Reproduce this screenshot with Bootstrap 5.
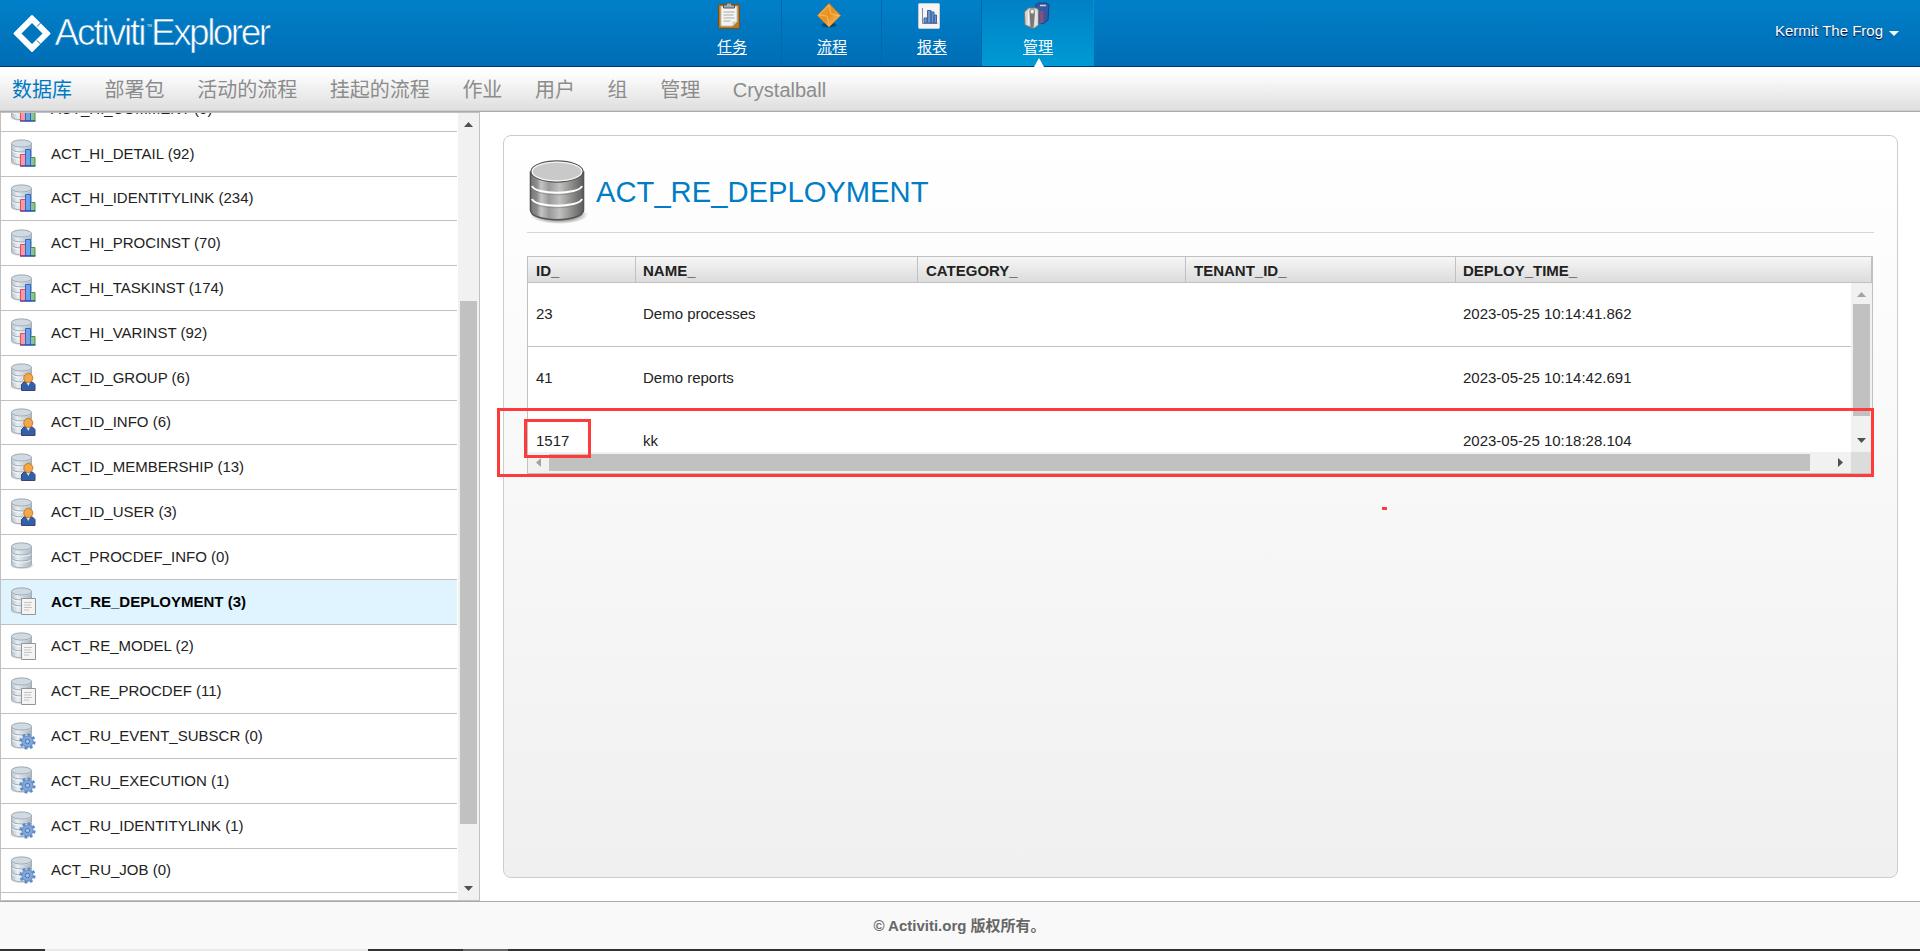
<!DOCTYPE html>
<html lang="zh-CN">
<head>
<meta charset="utf-8">
<title>Activiti Explorer</title>
<link href="https://cdn.jsdelivr.net/npm/bootstrap@5.3.0/dist/css/bootstrap.min.css" rel="stylesheet">
<style>
  body{height:951px;overflow:hidden;font:15px/20px "Liberation Sans","Noto Sans CJK SC",sans-serif;color:#222;background:#fff}
  .topbar{height:67px;flex:none;background:linear-gradient(#0080c9,#006db5);border-bottom:1px solid #00396b}
  .brand{width:706px;flex:none}
  .tabs{margin-left:-24px}
  .tab{height:66px;width:100px;color:#fff;border-right:1px solid #0068ad;font-size:15px;text-decoration:none}
  .tab span{text-decoration:underline;text-underline-offset:2px;line-height:20px;margin-top:6px;margin-right:34px}
  .tab svg{margin-top:1px;margin-right:35px}
  .tab.current{width:112px;background:linear-gradient(#0080c6,#009ad4);border-right:1px solid #0092cf}
  .tab.current span{margin-right:-1px}
  .tab.current svg.ti{margin-right:4px}
  .tab.current svg.notch{bottom:-1px;left:52px;margin:0}
  .user{color:#fff;text-shadow:0 1px 1px #003;margin-right:21px}
  .subnav{height:45px;flex:none;background:linear-gradient(#fff 10%,#dedede);border-bottom:1px solid #aaa;font-size:20px;line-height:46px;gap:32.6px;padding-left:12px;box-shadow:inset 0 -1px #d0d0d0}
  .subnav span{color:#8c8c8c}
  .subnav span.on{color:#0079c4}
  .side{width:480px;flex:none;border:1px solid #c1c1c1}
  .listing{width:456px;margin-right:1px}
  .listing ul{margin-top:-26px}
  .listing li{height:44.8px;border-bottom:1px solid #c1c1c1;padding-left:9px;gap:14px;white-space:nowrap}
  .listing li.sel{background:#dff4ff;font-weight:bold;color:#000}
  .listing li svg{flex:none}
  .vbar{background:#f1f1f1;width:21px;flex:none}
  .thumb{background:#c1c1c1}
  .panel{margin:23px 22px 23px 23px;border:1px solid #ccc;border-radius:8px;background:linear-gradient(#fff,#f0f0f0);padding:0 23px}
  .phead{height:97px;border-bottom:1px solid #d5d5d5}
  .phead h1{font-size:29.2px;line-height:40px;color:#007dc5;font-weight:400;margin:16px 0 0 7px;transform-origin:left}
  .grid-box{margin-top:23px;height:218px;border:1px solid #c1c1c1;width:1346px}
  .g{display:grid;grid-template-columns:108px 282px 268px 270px 1fr}
  .g>div{padding-left:8px}
  .g>div:nth-child(2),.g>div:nth-child(5){padding-left:7px}
  .ghead{height:26px;background:linear-gradient(#f6f6f6,#dcdcdc);border-bottom:1px solid #c1c1c1;font-weight:bold;line-height:27px}
  .ghead>div{border-right:1px solid #c1c1c1}
  .grow{height:63.5px;border-bottom:1px solid #c1c1c1;background:#fff;line-height:62.5px}
  .hbar{height:21px;background:#f1f1f1}
  .mark-red{position:absolute;border:3px solid #ff3a3a}
  .foot{height:48px;flex:none;background:#f9f9f9;border-top:1px solid #aaa;color:#666;font-weight:bold;font-size:15px;padding-right:1px;padding-top:1px}
  .edge{height:2px;flex:none;background:linear-gradient(90deg,#333 45px,#e8e8e8 45px,#e8e8e8 368px,#333 368px,#333 463px,#666 463px,#666 508px,#333 508px)}
</style>
</head>
<body class="d-flex flex-column position-relative">
<svg width="0" height="0" class="position-absolute">
  <defs>
    <linearGradient id="dbg"><stop offset="0" stop-color="#b4bec7"/><stop offset=".3" stop-color="#e8eef2"/><stop offset="1" stop-color="#aab6c0"/></linearGradient>
    <linearGradient id="big"><stop offset="0" stop-color="#777"/><stop offset=".12" stop-color="#8c8c8a"/><stop offset=".2" stop-color="#c4c4c4"/><stop offset=".35" stop-color="#9a9a9a"/><stop offset=".55" stop-color="#c0c0be"/><stop offset="1" stop-color="#5c5c5a"/></linearGradient>
    <radialGradient id="sh"><stop offset=".6" stop-color="#000" stop-opacity=".4"/><stop offset="1" stop-color="#000" stop-opacity="0"/></radialGradient>
    <linearGradient id="org" x2="1" y2="1"><stop offset="0" stop-color="#f2a53a"/><stop offset=".5" stop-color="#e8901c"/><stop offset="1" stop-color="#fbc77c"/></linearGradient>
    <symbol id="db" viewBox="0 0 27 29">
      <ellipse cx="12" cy="23.500" rx="12.500" ry="4" fill="url(#sh)" opacity=".5"/>
      <path d="M1.500 4.500v18c0 4.200 20 4.200 20 0v-18z" fill="url(#dbg)" stroke="#a5afb8"/>
      <path d="M2 10.500c1 3.300 18 3.300 19 0M2 16.500c1 3.300 18 3.300 19 0" fill="none" stroke="#9da9b4"/>
      <path d="M2 11.700c1 3.300 18 3.300 19 0M2 17.700c1 3.300 18 3.300 19 0M2 5.700c1 3.300 18 3.300 19 0" fill="none" stroke="#f7fafc"/>
      <ellipse cx="11.500" cy="4.500" rx="10" ry="3.600" fill="#cfdae2" stroke="#9aa6b1"/>
    </symbol>
    <symbol id="hi" viewBox="0 0 27 29"><use href="#db"/>
      <path d="M20.500 18.500h4.500v8.500h-4.500z" fill="#8cc58a" stroke="#4a8c56"/><path d="M10.500 15.500h5v11.500h-5z" fill="#ff9a9a" stroke="#e8485a"/><path d="M15.500 10.500h5v16.500h-5z" fill="#6aa5ea" stroke="#2f66d4"/><path d="M10 27h15.500" stroke="#1736a8"/></symbol>
    <symbol id="id" viewBox="0 0 27 29"><use href="#db"/>
      <path d="M11.500 27.500v-6l2.500-2.500h8.500l2.500 2.500v6z" fill="#2f62a8" stroke="#4b3a78"/><path d="M16 18.500l2.300 4.500 2.300-4.500z" fill="#dfe8f5"/><circle cx="18.300" cy="15" r="4.500" fill="#f0a94a" stroke="#d8741a"/></symbol>
    <symbol id="re" viewBox="0 0 27 29"><use href="#db"/>
      <path d="M11.500 11.500h14v16h-14z" fill="#f4f4f4" stroke="#959595"/><path d="M14 15.500h8M14 18h7M14 20.500h8M14 23h5" stroke="#c4c4c4"/></symbol>
    <symbol id="ru" viewBox="0 0 27 29"><use href="#db"/>
      <circle cx="17.500" cy="19.500" r="6.800" fill="none" stroke="#5a88c8" stroke-width="2.600" stroke-dasharray="2.800 2.540"/><circle cx="17.500" cy="19.500" r="5.500" fill="#83a8d8" stroke="#5b8ac9"/><circle cx="17.500" cy="19.500" r="2.200" fill="#a9c3e4" stroke="#4373b8"/></symbol>
  </defs>
</svg>

<header class="topbar d-flex">
  <div class="brand">
    <svg width="300" height="66">
      <path d="M32 16 49.500 33.500 32 51 14.500 33.500z" fill="#fff" stroke="#fff" stroke-width="2" stroke-linejoin="round"/>
      <path d="M32 23 42.500 33.500 32 44 21.500 33.500z" fill="#0076be"/>
      <path d="M37 26.500l4-4M37 40.500l4 4" stroke="#0076be" stroke-width="1"/>
      <g fill="#fff" font-family="'Liberation Sans',sans-serif" font-size="37" stroke="#0077bf" stroke-width=".7">
        <text x="54.500" y="44.500" textLength="92" lengthAdjust="spacing">Activiti</text>
        <text x="151" y="44.500" textLength="120" lengthAdjust="spacing">Explorer</text>
        <text x="147" y="27" font-size="4" stroke="none" textLength="5" lengthAdjust="spacingAndGlyphs">TM</text>
      </g>
    </svg>
  </div>
  <nav class="tabs d-flex">
    <a class="tab d-flex flex-column align-items-end"><svg width="34" height="30" viewBox="0 0 34 30"><rect x="6.500" y="3.500" width="21" height="24" rx="1.500" fill="#b67b25" stroke="#7c501a"/><path d="M9 5.500h16v15l-4.500 4.500h-11.500z" fill="#f4f4f2" stroke="#c7c7c0"/><path d="M20.500 25v-4.500h4.500" fill="#ccc"/><path d="M11.500 11h11M11.500 14h10M11.500 17h11M11.500 20h7" stroke="#aaa"/><path d="M11.500 7h11v-3h-3v-2h-5v2h-3z" fill="#aaa" stroke="#565656"/></svg><span>任务</span></a>
    <a class="tab d-flex flex-column align-items-end"><svg width="34" height="30" viewBox="0 0 34 30"><ellipse cx="17" cy="24" rx="9" ry="3" fill="url(#sh)"/><path d="M17 2.500 28.500 14.500 17 26 5.500 14.500z" fill="url(#org)" stroke="#d9861a"/><path d="M17 4l2 9 8 2M17 4 7 14l8 1 2 9" fill="none" stroke="#fbd08d" opacity=".6"/></svg><span>流程</span></a>
    <a class="tab d-flex flex-column align-items-end"><svg width="34" height="30" viewBox="0 0 34 30"><rect x="6.500" y="2.500" width="21" height="25" rx="1" fill="#f5f5f5" stroke="#c0cbd5"/><path d="M10.500 7v15.500h15" fill="none" stroke="#888"/><path d="M12 17h3v5h-3zM15.500 9.500h3.500v12.500h-3.500zM19 11h3v11h-3zM22 14h2.500v8h-2.500z" fill="#6c96cc" stroke="#3f659f"/></svg><span>报表</span></a>
    <a class="tab current d-flex flex-column align-items-center position-relative"><svg class="ti" width="34" height="30" viewBox="0 0 34 30"><path d="M17 6V3.500L20 2h7l3 2-1 15-5 4-7-3z" fill="#35599f" stroke="#243f7b"/><path d="M20.500 10h4v12h-4z" fill="#84517f"/><path d="M21 4.500h6" stroke="#c8d5ec" stroke-width="1.500"/><path d="M5.500 11l4-4h8l2 2v15l-3.500 3h-3l-7-3z" fill="#d6d6d3" stroke="#777"/><path d="M9.500 10v14M17 10v14" stroke="#f4f4f4"/><path d="M10.500 10.500c1-3 4.500-3 5.500 0l-1.500 16h-3z" fill="#777"/><ellipse cx="13.200" cy="10.500" rx="2.200" ry="2.500" fill="#eee" stroke="#888"/></svg><span>管理</span>
      <svg class="notch position-absolute" width="10" height="9" viewBox="0 0 10 9"><path d="M0 9 5 0l5 9z" fill="#fff"/></svg></a>
  </nav>
  <div class="user d-flex align-items-center ms-auto pb-1">Kermit The Frog<svg class="mt-1" style="margin-left:6px" width="10" height="5" viewBox="0 0 10 5"><path d="M0 0h10L5 5z" fill="#fff"/></svg></div>
</header>

<nav class="subnav d-flex">
  <span class="on">数据库</span><span>部署包</span><span>活动的流程</span><span>挂起的流程</span><span>作业</span><span>用户</span><span>组</span><span>管理</span><span>Crystalball</span>
</nav>

<main class="d-flex flex-grow-1 overflow-hidden">
  <aside class="side d-flex">
    <div class="listing overflow-hidden">
      <ul class="list-unstyled mb-0" id="tables"></ul>
    </div>
    <div class="vbar d-flex flex-column align-items-center">
      <svg width="21" height="21"><path d="M6 14h9l-4.500-5z" fill="#505050"/></svg>
      <div class="thumb" style="width:17px;height:523px;margin-top:167px"></div>
      <svg class="mt-auto" width="21" height="21"><path d="M6 7h9l-4.500 5z" fill="#505050"/></svg>
    </div>
  </aside>
  <section class="panel flex-grow-1">
    <div class="phead d-flex">
      <svg width="62" height="70" style="margin-top:23px" viewBox="0 0 62 70">
        <ellipse cx="32" cy="56" rx="29" ry="9" fill="url(#sh)"/>
        <path d="M3.500 13v38c0 13 53 13 53 0v-38z" fill="url(#big)" stroke="#555" stroke-width="1.600"/>
        <path d="M5 27c3 9 47 9 50 0M5 40c3 9 47 9 50 0" fill="none" stroke="#fff" stroke-width="2"/>
        <path d="M5 29c3 9 47 9 50 0M5 42c3 9 47 9 50 0" fill="none" stroke="#777" stroke-width="1" opacity=".5"/>
        <ellipse cx="30" cy="12.500" rx="26" ry="10.500" fill="#c9c9c9" stroke="#555" stroke-width="1.400"/>
        <ellipse cx="30" cy="12.500" rx="24.800" ry="9.300" fill="#c9c9c9" stroke="#f4f4f4" stroke-width="1.300"/>
      </svg>
      <h1 class="align-self-center">ACT_RE_DEPLOYMENT</h1>
    </div>
    <div class="grid-box">
      <div class="g ghead"><div>ID_</div><div>NAME_</div><div>CATEGORY_</div><div>TENANT_ID_</div><div>DEPLOY_TIME_</div></div>
      <div class="d-flex" style="height:169px">
        <div class="flex-grow-1 overflow-hidden bg-white">
          <div class="g grow"><div>23</div><div>Demo processes</div><div></div><div></div><div>2023-05-25 10:14:41.862</div></div>
          <div class="g grow"><div>41</div><div>Demo reports</div><div></div><div></div><div>2023-05-25 10:14:42.691</div></div>
          <div class="g grow"><div>1517</div><div>kk</div><div></div><div></div><div>2023-05-25 10:18:28.104</div></div>
        </div>
        <div class="vbar d-flex flex-column align-items-center">
          <svg width="21" height="21"><path d="M6 14h9l-4.500-5z" fill="#a3a3a3"/></svg>
          <div class="thumb" style="width:17px;height:112px"></div>
          <svg class="mt-auto" width="21" height="21"><path d="M6 7h9l-4.500 5z" fill="#505050"/></svg>
        </div>
      </div>
      <div class="hbar d-flex align-items-center">
        <svg width="21" height="21"><path d="M13 6v9l-5-4.500z" fill="#a3a3a3"/></svg>
        <div class="thumb" style="height:17px;width:1261px"></div>
        <svg class="ms-auto" width="21" height="21"><path d="M8 6v9l5-4.500z" fill="#505050"/></svg>
        <div style="width:21px;height:21px;background:#dcdcdc"></div>
      </div>
    </div>
  </section>
</main>

<footer class="foot d-flex align-items-center justify-content-center">© Activiti.org 版权所有。</footer>
<div class="edge"></div>

<div class="mark-red" style="left:497px;top:408px;width:1377px;height:69px"></div>
<div class="mark-red" style="left:524px;top:419px;width:67px;height:39px"></div>
<div class="position-absolute" style="left:1382px;top:507px;width:5px;height:3px;background:#ff3a3a"></div>

<script>
const rows=[["hi","ACT_HI_COMMENT (0)"],["hi","ACT_HI_DETAIL (92)"],["hi","ACT_HI_IDENTITYLINK (234)"],["hi","ACT_HI_PROCINST (70)"],["hi","ACT_HI_TASKINST (174)"],["hi","ACT_HI_VARINST (92)"],["id","ACT_ID_GROUP (6)"],["id","ACT_ID_INFO (6)"],["id","ACT_ID_MEMBERSHIP (13)"],["id","ACT_ID_USER (3)"],["db","ACT_PROCDEF_INFO (0)"],["re","ACT_RE_DEPLOYMENT (3)"],["re","ACT_RE_MODEL (2)"],["re","ACT_RE_PROCDEF (11)"],["ru","ACT_RU_EVENT_SUBSCR (0)"],["ru","ACT_RU_EXECUTION (1)"],["ru","ACT_RU_IDENTITYLINK (1)"],["ru","ACT_RU_JOB (0)"]];
document.getElementById("tables").innerHTML=rows.map(([i,t])=>`<li class="d-flex align-items-center${t.startsWith("ACT_RE_DEP")?" sel":""}"><svg width="27" height="29"><use href="#${i}"/></svg><span>${t}</span></li>`).join("");
</script>
<script src="https://cdn.jsdelivr.net/npm/bootstrap@5.3.0/dist/js/bootstrap.bundle.min.js"></script>
</body>
</html>
